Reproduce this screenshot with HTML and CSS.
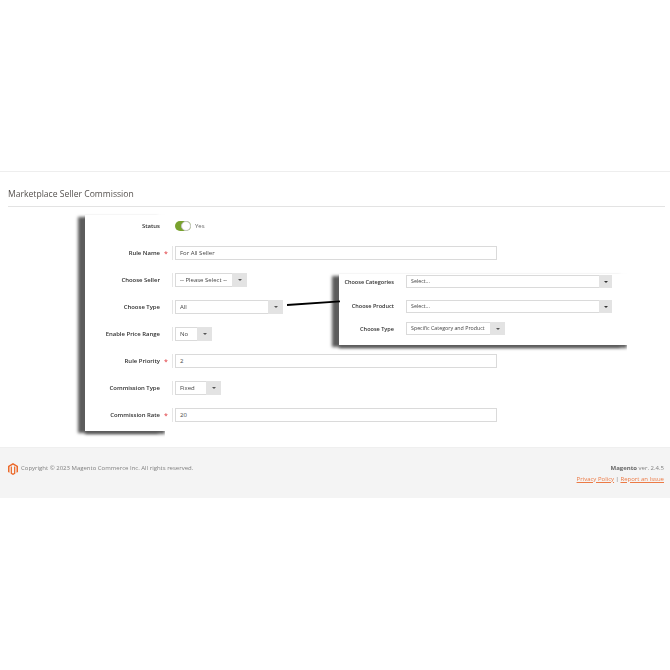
FILE: index.html
```html
<!DOCTYPE html>
<html lang="en">
<head>
<meta charset="utf-8">
<title>Marketplace Seller Commission</title>
<link rel="stylesheet" href="styles.css">
</head>
<body>
<div class="page">
  <section class="content">
    <h1 class="title">Marketplace Seller Commission</h1>
    <div class="form-area">
      <div class="form-shadow"></div>
      <form class="form">
        <div class="row">
          <div class="label">Status</div>
          <div class="toggle"><span class="knob"></span></div>
          <span class="toggle-text">Yes</span>
        </div>
        <div class="row">
          <div class="label req">Rule Name</div>
          <div class="field tick"><div class="input wide">For All Seller</div></div>
        </div>
        <div class="row">
          <div class="label">Choose Seller</div>
          <div class="field tick"><div class="select w-seller"><span class="val">-- Please Select --</span><span class="arrow"></span></div></div>
        </div>
        <div class="row">
          <div class="label">Choose Type</div>
          <div class="field tick"><div class="select w-type"><span class="val">All</span><span class="arrow"></span></div></div>
        </div>
        <div class="row">
          <div class="label">Enable Price Range</div>
          <div class="field tick"><div class="select w-no"><span class="val">No</span><span class="arrow"></span></div></div>
        </div>
        <div class="row">
          <div class="label req">Rule Priority</div>
          <div class="field tick"><div class="input wide">2</div></div>
        </div>
        <div class="row">
          <div class="label">Commission Type</div>
          <div class="field tick"><div class="select w-fixed"><span class="val">Fixed</span><span class="arrow"></span></div></div>
        </div>
        <div class="row">
          <div class="label req">Commission Rate</div>
          <div class="field tick"><div class="input wide">20</div></div>
        </div>
      </form>

      <div class="popout">
        <div class="pop-row">
          <div class="pop-label">Choose Categories</div>
          <div class="select w-pop"><span class="val">Select...</span><span class="arrow dark"></span></div>
        </div>
        <div class="pop-row">
          <div class="pop-label">Choose Product</div>
          <div class="select w-pop"><span class="val">Select...</span><span class="arrow dark"></span></div>
        </div>
        <div class="pop-row">
          <div class="pop-label">Choose Type</div>
          <div class="select w-spec"><span class="val">Specific Category and Product</span><span class="arrow"></span></div>
        </div>
      </div>

      <svg class="connector" width="60" height="10" viewBox="0 0 60 10" aria-hidden="true"><line x1="0" y1="8" x2="53" y2="4.400" stroke="#000" stroke-width="1.800"/></svg>
    </div>
  </section>

  <footer class="footer">
    <div class="copy">
      <svg class="logo" width="10" height="12" viewBox="0 0 20 24" aria-hidden="true"><path fill="#ec6a2b" d="M10 0 0 5.800v12L3 19.500V7.600l7-4 7 4v11.900l3-1.700v-12z"/><path fill="#ec6a2b" d="M10 24l-4.600-2.700V7.900l2.500-1.400v13.300l2.100 1.200 2.100-1.200V6.500l2.500 1.400v13.400z"/></svg>
      <span>Copyright © 2023 Magento Commerce Inc. All rights reserved.</span>
    </div>
    <div class="meta">
      <div><b>Magento</b> ver. 2.4.5</div>
      <div class="links"><a href="#">Privacy Policy</a> | <a href="#">Report an Issue</a></div>
    </div>
  </footer>
</div>
</body>
</html>
```

FILE: styles.css
```css
* { box-sizing: border-box; }
html, body { margin: 0; padding: 0; background: #fff; }
body { font-family: "Open Sans", "Liberation Sans", sans-serif; color: #555; }
.page { width: 670px; height: 670px; padding-top: 171px; overflow: hidden; filter: blur(0.3px); }

.content { border-top: 1px solid #eee; }
.title {
  margin: 0 5px 0 8px;
  padding: 15.500px 0 6.500px;
  height: 35px;
  font-size: 8.600px;
  line-height: 13px;
  font-weight: 400;
  color: #55514e;
  border-bottom: 1px solid #e3e3e3;
}
.form-area { position: relative; height: 240px; }

.form-shadow {
  position: absolute;
  left: 85px; top: 8px;
  width: 80px; height: 216px;
  background: #fff;
  box-shadow: -7px 2px 3px 0 #5c5c5c, 0 3px 3px 0 #5c5c5c;
  clip-path: inset(-12px 0 -12px -12px);
}
.form {
  position: relative;
  padding: 12px 0 0 0;
  display: flex;
  flex-direction: column;
  gap: 13px;
}
.row { display: flex; align-items: center; height: 14px; }
.label {
  width: 160px;
  text-align: right;
  font-size: 5.950px;
  font-weight: 600;
  color: #2f2f2f;
  white-space: nowrap;
  position: relative;
}
.req::after {
  content: "*";
  position: absolute;
  left: 164px; top: 0;
  color: #e4585c;
  font-size: 7px;
}
.field { margin-left: 12px; padding-left: 2px; }
.tick { border-left: 1px solid #e6e6e6; height: 14px; }

.toggle {
  margin-left: 15px;
  width: 16px; height: 10px;
  border-radius: 5px;
  background: #79a22e;
  position: relative;
}
.knob {
  position: absolute;
  right: 0; top: 0;
  width: 10px; height: 10px;
  border-radius: 50%;
  background: #fff;
  border: 1px solid #c8c8c8;
}
.toggle-text { margin-left: 4px; font-size: 6px; color: #666; }

.input, .select {
  height: 14px;
  background: #fff;
  border: 1px solid #dadada;
  font-size: 6px;
  line-height: 12px;
  color: #444;
  white-space: nowrap;
}
.input { padding-left: 4px; }
.wide { width: 322px; }
.select { display: flex; justify-content: space-between; }
.val { padding-left: 4px; overflow: hidden; }
.arrow {
  width: 15px;
  margin: -1px -1px -1px 0;
  background: #e3e3e3;
  position: relative;
  flex: none;
}
.arrow::after {
  content: "";
  position: absolute;
  left: 5.500px; top: 6px;
  border: 2px solid transparent;
  border-top: 2.500px solid #555;
  border-bottom: 0;
}
.arrow.dark { width: 13px; }
.arrow.dark::after { left: 4.500px; border-top-color: #333; }
.w-seller { width: 72px; }
.w-type { width: 108px; }
.w-no { width: 37px; }
.w-fixed { width: 46px; }

.connector { position: absolute; left: 287px; top: 90px; }

.popout {
  position: absolute;
  left: 339px; top: 67px;
  width: 288px; height: 71px;
  background: #fff;
  box-shadow: -7px 2px 3px 0 #5c5c5c, 0 3px 3px 0 #5c5c5c;
  clip-path: inset(-12px 0 -12px -12px);
  padding: 1px 0 0;
  display: flex;
  flex-direction: column;
  gap: 11.500px;
}
.pop-row { display: flex; align-items: center; height: 13px; }
.pop-row:last-child { margin-top: -2px; }
.pop-label {
  width: 55px;
  margin-right: 12px;
  text-align: right;
  font-size: 5.550px;
  font-weight: 600;
  color: #2f2f2f;
  white-space: nowrap;
}
.popout .select { height: 13px; line-height: 11px; font-size: 5.300px; }
.w-pop { width: 206px; }
.w-spec { width: 99px; }

.footer {
  position: absolute;
  left: 0; top: 447px;
  width: 670px; height: 51px;
  background: #f4f4f4;
  border-top: 1px solid #efefef;
  padding: 14.500px 6px 0 8px;
  display: flex;
  justify-content: space-between;
  font-size: 6px;
  line-height: 11px;
  color: #808080;
}
.copy { display: flex; align-items: flex-start; gap: 3px; }
.logo { flex: none; }
.meta { text-align: right; }
.meta b { font-weight: 700; color: #666; }
.links { color: #777; }
.links a { color: #ec7a45; text-decoration: underline; }
```
